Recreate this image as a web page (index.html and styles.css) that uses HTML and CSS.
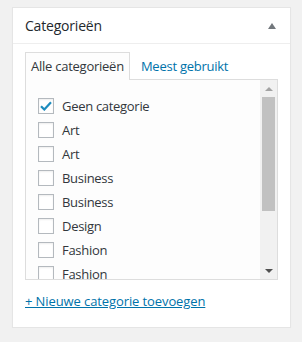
FILE: index.html
```html
<!DOCTYPE html>
<html lang="nl">
<head>
    <meta charset="UTF-8">
    <title>Categorieën</title>
    <link rel="stylesheet" href="styles.css">
</head>
<body>
    <div class="postbox">
        <div class="postbox-header">
            <h2>Categorieën</h2>
            <span class="toggle"></span>
        </div>
        <div class="inside">
            <ul class="tabs">
                <li class="tab active">Alle categorieën</li>
                <li class="tab">Meest gebruikt</li>
            </ul>
            <div class="tabs-panel">
                <ul class="checklist">
                    <li><span class="check checked"><svg width="12" height="10" viewBox="0 0 12 10"><path d="M1 5.2 L4.3 8.5 L11 1.2" fill="none" stroke="#1e8cbe" stroke-width="2.2"/></svg></span>Geen categorie</li>
                    <li><span class="check"></span>Art</li>
                    <li><span class="check"></span>Art</li>
                    <li><span class="check"></span>Business</li>
                    <li><span class="check"></span>Business</li>
                    <li><span class="check"></span>Design</li>
                    <li><span class="check"></span>Fashion</li>
                    <li><span class="check"></span>Fashion</li>
                </ul>
                <div class="scrollbar">
                    <div class="arrow up"></div>
                    <div class="track"><div class="thumb"></div></div>
                    <div class="arrow down"></div>
                </div>
            </div>
            <a href="#" class="add-link">+ Nieuwe categorie toevoegen</a>
        </div>
    </div>
</body>
</html>
```

FILE: styles.css
```css
body {
    margin: 0;
    padding: 7px 11px 0 12px;
    background-color: #f1f1f1;
    font-family: "Open Sans", Arial, sans-serif;
    color: #32373c;
}
.postbox {
    background-color: #fff;
    border: 1px solid #e5e5e5;
    box-shadow: 0 1px 1px rgba(0,0,0,0.04);
    height: 321px;
    box-sizing: border-box;
}
.postbox-header {
    display: flex;
    align-items: center;
    justify-content: space-between;
    height: 35px;
    padding: 0 14px 0 12px;
    border-bottom: 1px solid #eee;
}
.postbox-header h2 {
    margin: 0;
    font-size: 14px;
    font-weight: 400;
    color: #23282d;
    letter-spacing: -0.2px;
}
.toggle {
    width: 0;
    height: 0;
    border-left: 4px solid transparent;
    border-right: 4px solid transparent;
    border-bottom: 6px solid #72777c;
}
.inside {
    padding: 8px 12px 0 12px;
}
.tabs {
    display: flex;
    margin: 0;
    padding: 0;
    list-style: none;
    font-size: 13px;
    letter-spacing: -0.25px;
}
.tab {
    padding: 5px;
    line-height: 16px;
    border: 1px solid transparent;
    border-bottom: none;
    color: #0073aa;
    margin-right: 5px;
}
.tab.active {
    border-color: #ddd;
    background-color: #fdfdfd;
    color: #32373c;
    margin-bottom: -1px;
    position: relative;
}
.tabs-panel {
    display: flex;
    height: 201px;
    box-sizing: border-box;
    border: 1px solid #ddd;
    background-color: #fdfdfd;
    overflow: hidden;
}
.checklist {
    flex: 1;
    margin: 0;
    padding: 14px 0 0 12px;
    list-style: none;
    font-size: 13px;
    letter-spacing: -0.3px;
}
.checklist li {
    display: flex;
    align-items: center;
    height: 24px;
    white-space: nowrap;
}
.check {
    display: inline-flex;
    align-items: center;
    justify-content: center;
    width: 16px;
    height: 16px;
    box-sizing: border-box;
    border: 1px solid #b4b9be;
    background-color: #fff;
    box-shadow: inset 0 1px 2px rgba(0,0,0,0.07);
    margin-right: 8px;
    flex-shrink: 0;
}
.scrollbar {
    width: 17px;
    display: flex;
    flex-direction: column;
    background-color: #f1f1f1;
}
.arrow {
    height: 17px;
    display: flex;
    align-items: center;
    justify-content: center;
}
.arrow::after {
    content: "";
    width: 0;
    height: 0;
    border-left: 4px solid transparent;
    border-right: 4px solid transparent;
}
.arrow.up::after {
    border-bottom: 4px solid #a3a3a3;
}
.arrow.down::after {
    border-top: 4px solid #505050;
}
.track {
    flex: 1;
}
.thumb {
    margin: 0 2px;
    height: 114px;
    background-color: #c1c1c1;
}
.add-link {
    display: inline-block;
    margin-top: 12px;
    font-size: 13px;
    color: #0073aa;
    text-decoration: underline;
    letter-spacing: -0.1px;
}
```
